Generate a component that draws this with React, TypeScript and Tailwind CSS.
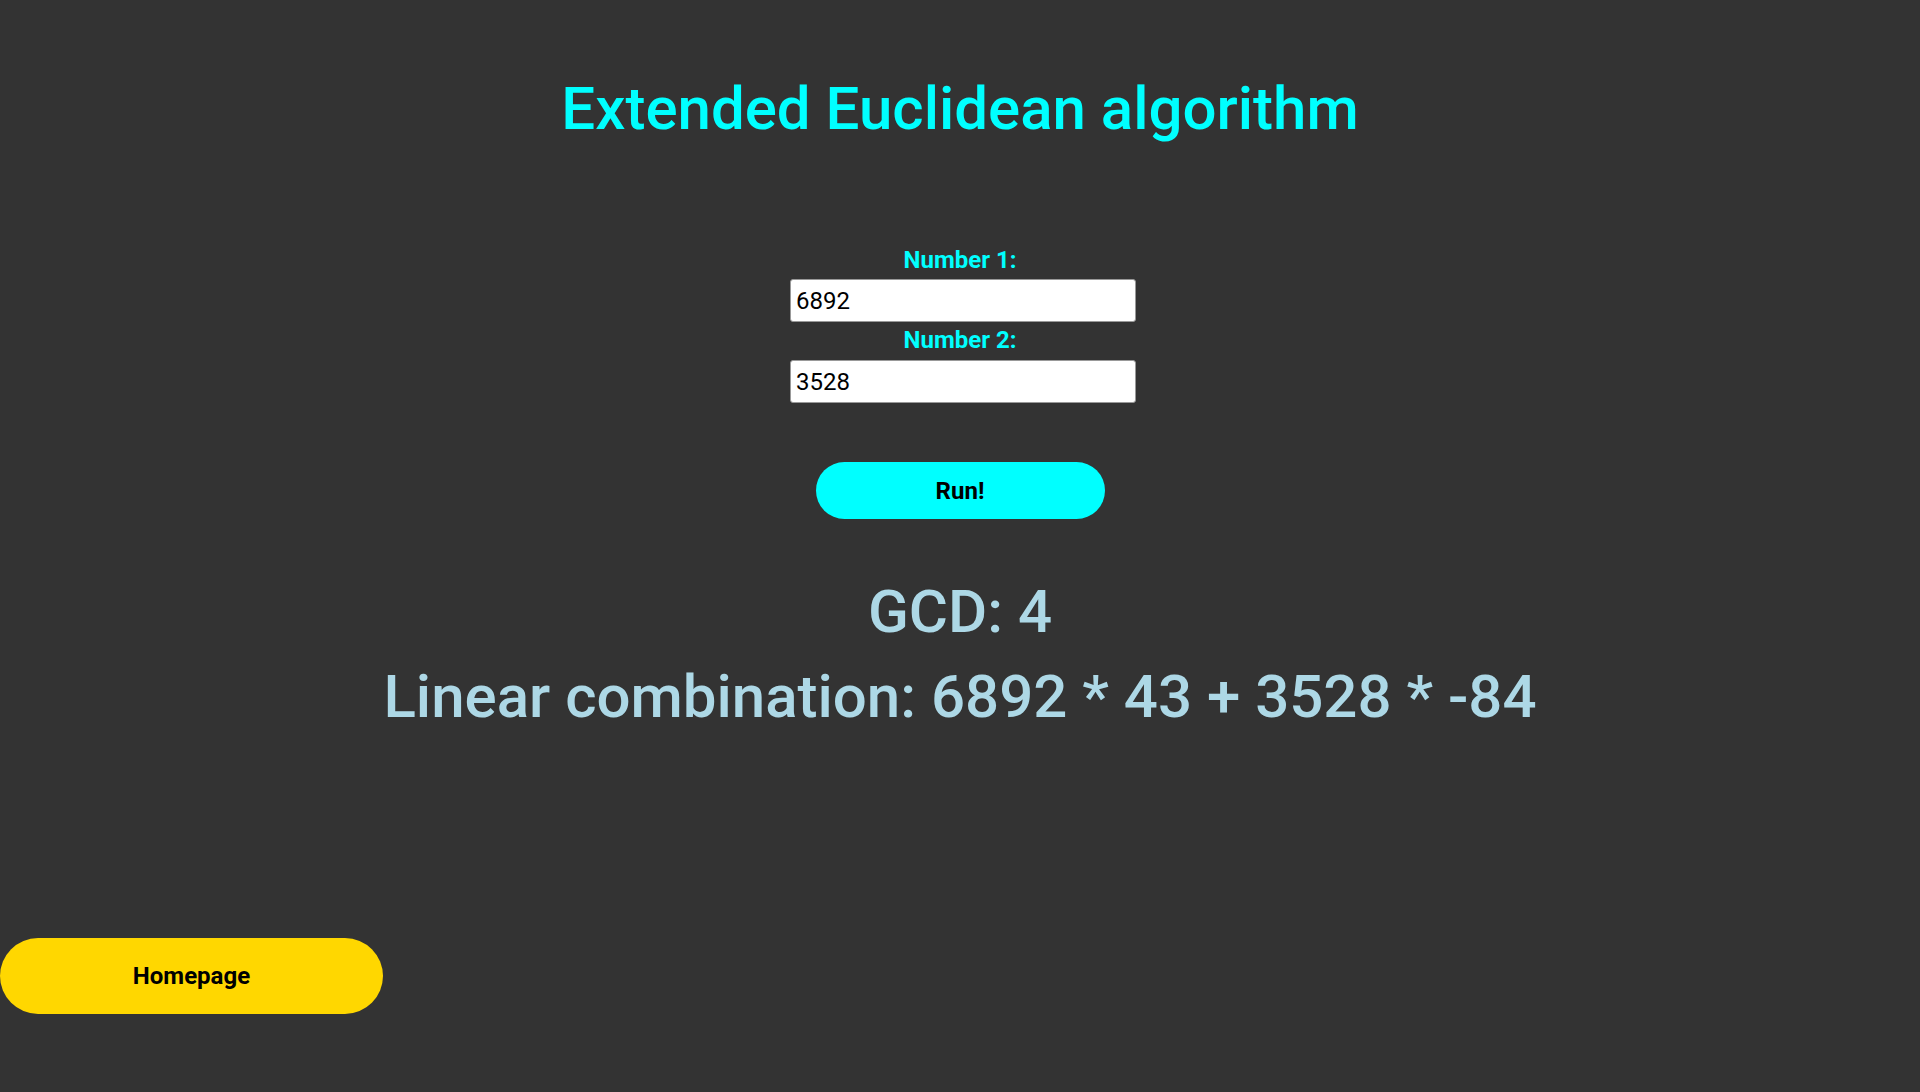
import React from "react";

export default function App() {
  return (
    <div
      className="min-h-[1092px] w-full bg-[#333333] flex flex-col"
      style={{ fontFamily: "Roboto, 'Liberation Sans', sans-serif" }}
    >
      <div className="flex flex-col items-center pt-[74px]">
        <h1 className="text-[60px] leading-[70px] font-medium text-[#00ffff]">
          Extended Euclidean algorithm
        </h1>
        <div className="flex flex-col items-center mt-[102px]">
          <label className="text-[24px] leading-[28px] font-bold text-[#00ffff]">
            Number 1:
          </label>
          <input
            readOnly
            value="6892"
            className="mt-[5px] ml-[6px] w-[346px] h-[43px] bg-white rounded-[3px] border border-[#999] px-[5px] text-[24px] text-black outline-none"
          />
          <label className="mt-[4px] text-[24px] leading-[28px] font-bold text-[#00ffff]">
            Number 2:
          </label>
          <input
            readOnly
            value="3528"
            className="mt-[6px] ml-[6px] w-[346px] h-[43px] bg-white rounded-[3px] border border-[#999] px-[5px] text-[24px] text-black outline-none"
          />
          <button className="mt-[59px] w-[289px] h-[57px] rounded-full bg-[#00ffff] text-[24px] font-bold text-black">
            Run!
          </button>
        </div>
        <div className="mt-[58px] text-[60px] leading-[70px] font-medium text-[#add8e6]">
          GCD: 4
        </div>
        <div className="mt-[15px] text-[60px] leading-[70px] font-medium text-[#add8e6]">
          Linear combination: 6892 * 43 + 3528 * -84
        </div>
      </div>
      <div className="mt-[206px]">
        <button className="w-[383px] h-[76px] rounded-full bg-[#ffd700] text-[24px] font-bold text-black">
          Homepage
        </button>
      </div>
    </div>
  );
}
